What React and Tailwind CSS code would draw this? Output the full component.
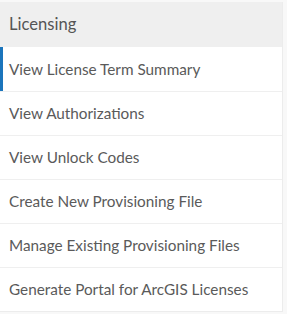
import React from "react";

const items = [
  "View License Term Summary",
  "View Authorizations",
  "View Unlock Codes",
  "Create New Provisioning File",
  "Manage Existing Provisioning Files",
  "Generate Portal for ArcGIS Licenses",
];

export default function App() {
  return (
    <div className="w-[287px] h-[314px] bg-[#f8f8f8] pt-[2px] overflow-hidden" style={{ fontFamily: "Lato, 'Open Sans', sans-serif" }}>
      <div className="w-[283px] border-r border-b border-[#ececec] bg-white">
        <div className="h-[45px] bg-[#efefef] flex items-center pl-[9px] text-[16.6px] text-[#555555]">
          Licensing
        </div>
        {items.map((t, i) => (
          <div
            key={t}
            className={
              "h-[44px] flex items-center pl-[9px] text-[15.3px] text-[#5a5a5a] border-t border-[#efefef] relative " +
              (i === 0 ? "border-t-0" : "")
            }
          >
            {i === 0 && <span className="absolute left-0 top-0 bottom-0 w-[3px] bg-[#1b75bc]" />}
            {t}
          </div>
        ))}
      </div>
    </div>
  );
}
